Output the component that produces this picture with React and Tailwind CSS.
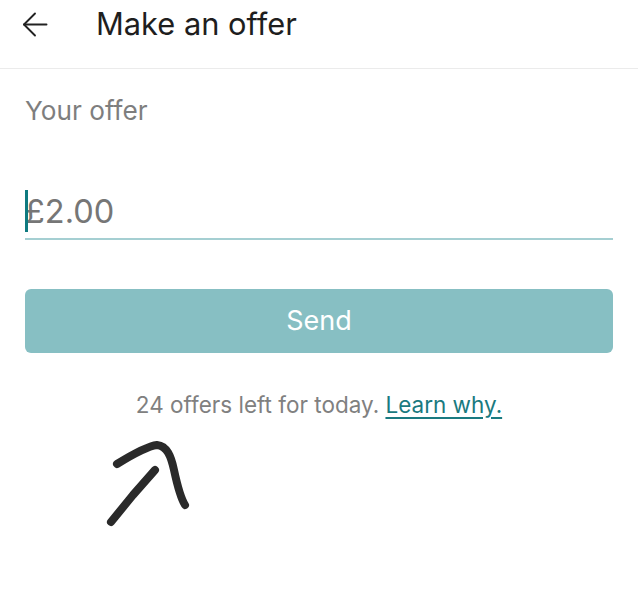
export default function App() {
  return (
    <div className="relative w-[638px] h-[600px] bg-white overflow-hidden" style={{ fontFamily: 'Inter, "Liberation Sans", sans-serif' }}>
      <header className="h-[69px] flex items-center border-b border-[#ebebeb] pl-[21px] pb-[20px]">
        <svg width="30" height="30" viewBox="0 0 30 30" fill="none" stroke="#222222" strokeWidth="1.9" strokeLinecap="round" strokeLinejoin="round" className="shrink-0">
          <path d="M3 15.5H25.5" />
          <path d="M14 4.5L3 15.5L14 26.5" />
        </svg>
        <h1 className="ml-[45px] text-[30.8px] leading-[38px] font-normal text-[#1e1e1e]">Make an offer</h1>
      </header>
      <main className="px-[25px]">
        <p className="mt-[24px] text-[26.2px] leading-[36px] text-[#7e7e7e]">Your offer</p>
        <div className="relative mt-[60px] h-[51px] border-b-2 border-[#a5cfd2] flex items-end pb-[7px]">
          <span className="absolute left-0 top-[1px] w-[3px] h-[42px] bg-[#0f7a80]" />
          <span className="text-[32.5px] leading-[38px] text-[#767676]">£2.00</span>
        </div>
        <button className="mt-[49px] w-full h-[64px] rounded-[6px] bg-[#87bfc3] text-white text-[27px] leading-[36px] flex items-center justify-center">Send</button>
        <p className="mt-[35px] text-center text-[22.5px] leading-[34px] text-[#808080]">
          24 offers left for today. <a className="text-[#1a7a80] underline underline-offset-4">Learn why.</a>
        </p>
      </main>
      <svg className="absolute left-0 top-0" width="638" height="600" viewBox="0 0 638 600" fill="none" stroke="#2a2a2a" strokeWidth="8" strokeLinecap="round" strokeLinejoin="round">
        <path d="M111 522L133 495L155 470" />
        <path d="M117 464C130 456 148 446 157 445C167 446 171 456 174 470C177 484 180 497 185 505" />
      </svg>
    </div>
  );
}
